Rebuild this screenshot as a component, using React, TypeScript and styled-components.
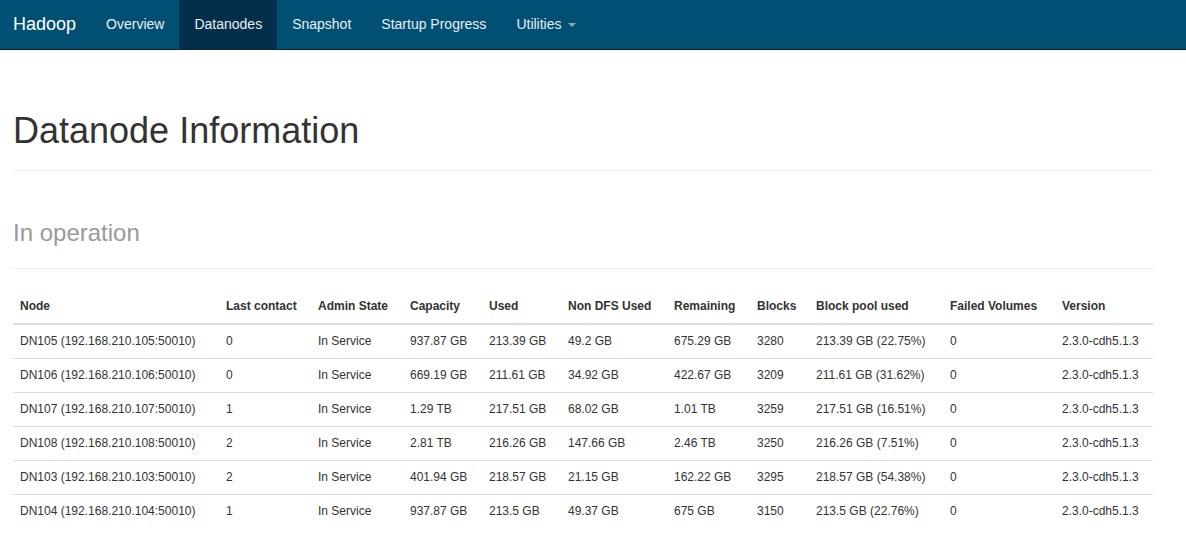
import React from 'react';
import styled, { createGlobalStyle } from 'styled-components';

const GlobalStyle = createGlobalStyle`
  html, body {
    margin: 0;
    padding: 0;
    background: #fff;
  }
  body {
    font-family: "Liberation Sans", Arial, Helvetica, sans-serif;
    font-size: 14px;
    line-height: 1.42857;
    color: #333;
  }
`;

const Navbar = styled.nav`
  height: 49px;
  background: #014f73;
  border-bottom: 1px solid #0b2232;
  display: flex;
  align-items: stretch;
`;

const Brand = styled.a`
  display: flex;
  align-items: center;
  padding: 0 15px 0 13px;
  font-size: 18px;
  color: #fff;
  text-decoration: none;
`;

const NavList = styled.ul`
  display: flex;
  list-style: none;
  margin: 0;
  padding: 0;
`;

const NavItem = styled.li<{ $active?: boolean }>`
  display: flex;
  align-items: center;
  padding: 0 15px;
  color: #e8eef2;
  background: ${p => (p.$active ? '#032f4a' : 'transparent')};
  font-size: 14px;
  cursor: pointer;
`;

const Caret = styled.span`
  display: inline-block;
  width: 0;
  height: 0;
  margin-left: 6px;
  border-top: 4px solid #8aa4b4;
  border-left: 4px solid transparent;
  border-right: 4px solid transparent;
  vertical-align: middle;
`;

const Container = styled.main`
  padding: 0 33px 0 13px;
`;

const PageHeader = styled.div`
  margin: 61px 0 0;
  padding-bottom: 19px;
  border-bottom: 1px solid #eee;
`;

const Title = styled.h1`
  margin: 0;
  font-size: 36px;
  font-weight: 400;
  line-height: 40px;
  color: #333;
`;

const SubHeader = styled.div`
  margin: 47px 0 0;
  padding-bottom: 20px;
  border-bottom: 1px solid #eee;
`;

const Subtitle = styled.h2`
  margin: 0;
  font-size: 24px;
  font-weight: 400;
  line-height: 30px;
  color: #999;
`;

const Table = styled.table`
  width: 100%;
  margin-top: 20px;
  border-collapse: collapse;
  table-layout: fixed;
  font-size: 12px;
`;

const Th = styled.th`
  text-align: left;
  font-weight: 700;
  padding: 8px 7px;
  line-height: 18px;
  border-bottom: 2px solid #ddd;
  color: #333;
  white-space: nowrap;
`;

const Td = styled.td`
  padding: 8px 7px;
  line-height: 17px;
  border-top: 1px solid #ddd;
  color: #333;
  white-space: nowrap;
`;

const columns: [string, number][] = [
  ['Node', 206],
  ['Last contact', 92],
  ['Admin State', 92],
  ['Capacity', 79],
  ['Used', 79],
  ['Non DFS Used', 106],
  ['Remaining', 83],
  ['Blocks', 59],
  ['Block pool used', 134],
  ['Failed Volumes', 112],
  ['Version', 98],
];

const rows = [
  ['DN105 (192.168.210.105:50010)', '0', 'In Service', '937.87 GB', '213.39 GB', '49.2 GB', '675.29 GB', '3280', '213.39 GB (22.75%)', '0', '2.3.0-cdh5.1.3'],
  ['DN106 (192.168.210.106:50010)', '0', 'In Service', '669.19 GB', '211.61 GB', '34.92 GB', '422.67 GB', '3209', '211.61 GB (31.62%)', '0', '2.3.0-cdh5.1.3'],
  ['DN107 (192.168.210.107:50010)', '1', 'In Service', '1.29 TB', '217.51 GB', '68.02 GB', '1.01 TB', '3259', '217.51 GB (16.51%)', '0', '2.3.0-cdh5.1.3'],
  ['DN108 (192.168.210.108:50010)', '2', 'In Service', '2.81 TB', '216.26 GB', '147.66 GB', '2.46 TB', '3250', '216.26 GB (7.51%)', '0', '2.3.0-cdh5.1.3'],
  ['DN103 (192.168.210.103:50010)', '2', 'In Service', '401.94 GB', '218.57 GB', '21.15 GB', '162.22 GB', '3295', '218.57 GB (54.38%)', '0', '2.3.0-cdh5.1.3'],
  ['DN104 (192.168.210.104:50010)', '1', 'In Service', '937.87 GB', '213.5 GB', '49.37 GB', '675 GB', '3150', '213.5 GB (22.76%)', '0', '2.3.0-cdh5.1.3'],
];

const navItems = ['Overview', 'Datanodes', 'Snapshot', 'Startup Progress'];

const App: React.FC = () => {
  return (
    <>
      <GlobalStyle />
      <Navbar>
        <Brand>Hadoop</Brand>
        <NavList>
          {navItems.map(item => (
            <NavItem key={item} $active={item === 'Datanodes'}>
              {item}
            </NavItem>
          ))}
          <NavItem>
            Utilities
            <Caret />
          </NavItem>
        </NavList>
      </Navbar>
      <Container>
        <PageHeader>
          <Title>Datanode Information</Title>
        </PageHeader>
        <SubHeader>
          <Subtitle>In operation</Subtitle>
        </SubHeader>
        <Table>
          <colgroup>
            {columns.map(([name, w]) => (
              <col key={name} style={{ width: w }} />
            ))}
          </colgroup>
          <thead>
            <tr>
              {columns.map(([name]) => (
                <Th key={name}>{name}</Th>
              ))}
            </tr>
          </thead>
          <tbody>
            {rows.map(row => (
              <tr key={row[0]}>
                {row.map((cell, i) => (
                  <Td key={i}>{cell}</Td>
                ))}
              </tr>
            ))}
          </tbody>
        </Table>
      </Container>
    </>
  );
};

export default App;
